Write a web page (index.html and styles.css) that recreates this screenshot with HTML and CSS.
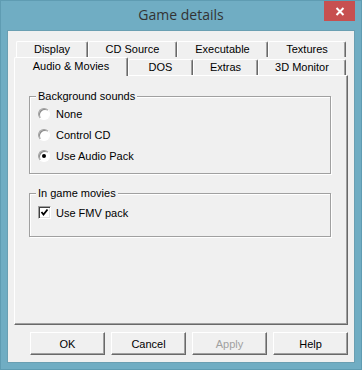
FILE: index.html
```html
<!DOCTYPE html>
<html lang="en">
<head>
    <meta charset="UTF-8">
    <title>Game details</title>
    <link rel="stylesheet" href="styles.css">
</head>
<body>
    <div class="window">
        <div class="titlebar">
            <span></span>
            <span class="title">Game details</span>
            <span class="close">
                <svg width="10" height="9" viewBox="0 0 10 9">
                    <path d="M1.5 1 L8.5 8 M8.5 1 L1.5 8" stroke="#fff" stroke-width="2" fill="none"/>
                </svg>
            </span>
        </div>

        <div class="client">
            <!-- back row of tabs -->
            <div class="tab-row back">
                <div class="tab w-display">Display</div>
                <div class="tab w-cd">CD Source</div>
                <div class="tab w-exe">Executable</div>
                <div class="tab w-tex">Textures</div>
            </div>
            <!-- front row of tabs -->
            <div class="tab-row front">
                <div class="tab selected w-audio">Audio &amp; Movies</div>
                <div class="tab w-dos">DOS</div>
                <div class="tab w-extras">Extras</div>
                <div class="tab w-3d">3D Monitor</div>
            </div>

            <div class="panel">
                <fieldset class="group first">
                    <legend>Background sounds</legend>
                    <div class="option"><span class="radio"></span>None</div>
                    <div class="option"><span class="radio"></span>Control CD</div>
                    <div class="option"><span class="radio checked"></span>Use Audio Pack</div>
                </fieldset>

                <fieldset class="group second">
                    <legend>In game movies</legend>
                    <div class="option check-option">
                        <span class="checkbox">
                            <svg width="9" height="9" viewBox="0 0 9 9">
                                <path d="M1.5 4 L3.5 6.5 L7.5 1.5" stroke="#000" stroke-width="1.8" fill="none"/>
                            </svg>
                        </span>Use FMV pack
                    </div>
                </fieldset>
            </div>

            <div class="buttons">
                <button class="btn">OK</button>
                <button class="btn">Cancel</button>
                <button class="btn disabled">Apply</button>
                <button class="btn">Help</button>
            </div>
        </div>
    </div>
</body>
</html>
```

FILE: styles.css
```css
body {
    margin: 0;
    font-family: "Liberation Sans", Arial, sans-serif;
    font-size: 11px;
    color: #000;
}

.window {
    width: 362px;
    height: 370px;
    box-sizing: border-box;
    background-color: #70adc3;
    box-shadow: inset 0 0 0 1px #5f9cb2;
    display: flex;
    flex-direction: column;
}

/* Title bar */
.titlebar {
    height: 31px;
    display: grid;
    grid-template-columns: 1fr auto 1fr;
    align-items: start;
}

.title {
    font-family: "Open Sans", "Noto Sans", sans-serif;
    font-size: 14px;
    line-height: 30px;
    color: #333;
}

.close {
    justify-self: end;
    width: 31px;
    height: 20px;
    margin: 1px 7px 0 0;
    background-color: #c75050;
    display: flex;
    align-items: center;
    justify-content: center;
}

/* Client area */
.client {
    flex: 1;
    margin: 0 8px 8px;
    padding: 10px 6px 0;
    background-color: #f0f0f0;
    box-shadow: 0 0 0 1px #6a9fb2;
}

/* Tabs */
.tab-row {
    display: flex;
}

.back {
    height: 16px;
    margin-left: 2px;
}

.front {
    height: 18px;
    align-items: flex-start;
}

.tab {
    box-sizing: border-box;
    height: 16px;
    border: 1px solid;
    border-color: #fff #696969 transparent #fff;
    border-bottom: none;
    border-radius: 2px 2px 0 0;
    box-shadow: inset -1px 0 0 #a0a0a0;
    background-color: #f0f0f0;
    text-align: center;
    line-height: 15px;
}

.front .tab {
    margin-top: 2px;
}

.front .tab.selected {
    margin-top: 0;
    height: 19px;
    line-height: 16px;
    position: relative;
    z-index: 1;
}

.w-display { width: 72px; }
.w-cd { width: 89px; }
.w-exe { width: 91px; }
.w-tex { width: 78px; }
.w-audio { width: 114px; }
.w-dos { width: 65px; }
.w-extras { width: 65px; }
.w-3d { width: 88px; }

/* Tab page */
.panel {
    height: 250px;
    box-sizing: border-box;
    border: 1px solid;
    border-color: #fff #696969 #696969 #fff;
    box-shadow: inset -1px -1px 0 #a0a0a0;
    padding: 14px 16px 0 14px;
}

.group {
    margin: 0;
    border: 1px solid #a0a0a0;
    box-shadow: inset 1px 1px 0 #fff, 1px 1px 0 #fff;
    padding: 0 8px 7px;
}

.group legend {
    padding: 0 2px;
    margin-left: -2px;
    line-height: 13px;
    background-color: #f0f0f0;
}

.group.second {
    margin-top: 13px;
    padding-top: 2px;
    padding-bottom: 13px;
}

.option {
    height: 21px;
    display: flex;
    align-items: center;
    gap: 6px;
}

.check-option {
    gap: 5px;
}

.radio {
    width: 12px;
    height: 12px;
    box-sizing: border-box;
    border-radius: 50%;
    border: 1px solid;
    border-color: #a0a0a0 #fff #fff #a0a0a0;
    box-shadow: inset 1px 1px 0 #8a8a8a;
    background-color: #fff;
    display: flex;
    align-items: center;
    justify-content: center;
}

.radio.checked::after {
    content: "";
    width: 4px;
    height: 4px;
    border-radius: 50%;
    background-color: #000;
}

.checkbox {
    width: 13px;
    height: 13px;
    box-sizing: border-box;
    border: 1px solid;
    border-color: #a0a0a0 #fff #fff #a0a0a0;
    box-shadow: inset 1px 1px 0 #404040, inset -1px -1px 0 #e3e3e3;
    background-color: #fff;
    display: flex;
    align-items: center;
    justify-content: center;
}

/* Dialog buttons */
.buttons {
    display: flex;
    justify-content: flex-end;
    gap: 6px;
    margin-top: 7px;
}

.btn {
    width: 75px;
    height: 23px;
    box-sizing: border-box;
    padding: 0;
    border: 1px solid;
    border-color: #fff #696969 #696969 #fff;
    box-shadow: inset -1px -1px 0 #a0a0a0;
    background-color: #f0f0f0;
    font: inherit;
    color: #000;
}

.btn.disabled {
    color: #a0a0a0;
}
```
